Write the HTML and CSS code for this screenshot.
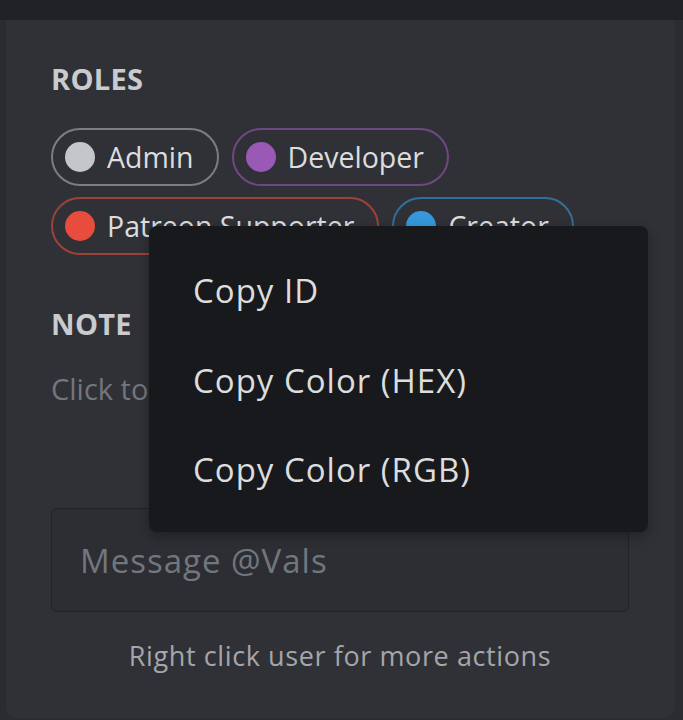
FILE: index.html
```html
<!DOCTYPE html>
<html>
<head>
<meta charset="utf-8">
<link rel="stylesheet" href="styles.css">
</head>
<body>
<div class="top"></div>
<div class="panel">
  <div class="section-title roles-title">ROLES</div>
  <div class="roles">
    <div class="role role-admin"><span class="dot"></span><span class="role-name">Admin</span></div>
    <div class="role role-dev"><span class="dot"></span><span class="role-name">Developer</span></div>
    <div class="role role-patreon"><span class="dot"></span><span class="role-name">Patreon Supporter</span></div>
    <div class="role role-creator"><span class="dot"></span><span class="role-name">Creator</span></div>
  </div>
  <div class="section-title note-title">NOTE</div>
  <div class="note">Click to add a note</div>
  <div class="message">Message @Vals</div>
  <div class="hint">Right click user for more actions</div>
</div>
<div class="menu">
  <div class="menu-item">Copy ID</div>
  <div class="menu-item">Copy Color (HEX)</div>
  <div class="menu-item">Copy Color (RGB)</div>
</div>
</body>
</html>
```
FILE: styles.css
```css
html, body {
  margin: 0;
  padding: 0;
}
body {
  width: 683px;
  height: 720px;
  background: #2a2c30;
  font-family: "Open Sans", "Noto Sans", sans-serif;
  overflow: hidden;
  position: relative;
}
.top {
  height: 20px;
  background: #202225;
}
.panel {
  margin: 0 8px 0 6px;
  height: 698px;
  box-sizing: border-box;
  background: #2f3136;
  border-radius: 0 4px 12px 12px;
  padding: 0 0 0 45px;
  display: flex;
  flex-direction: column;
}
.section-title {
  font-weight: 700;
  font-size: 29px;
  line-height: 36px;
  color: #c9cbce;
  letter-spacing: 0.3px;
}
.roles-title {
  margin-top: 41px;
}
.roles {
  display: flex;
  flex-wrap: wrap;
  gap: 11px 13px;
  margin-top: 31px;
  width: 560px;
}
.role {
  height: 58px;
  box-sizing: border-box;
  border: 2px solid;
  border-radius: 29px;
  display: flex;
  align-items: center;
  padding: 0 23px 0 12px;
  gap: 12px;
  font-size: 28.5px;
  color: #dcddde;
}
.dot {
  width: 30px;
  height: 30px;
  border-radius: 50%;
  flex: none;
}
.role-admin { border-color: rgba(185, 187, 190, 0.55); }
.role-admin .dot { background: #c4c6c9; }
.role-dev { border-color: rgba(155, 89, 182, 0.6); }
.role-dev .dot { background: #9b59b6; }
.role-patreon { border-color: rgba(231, 76, 60, 0.6); }
.role-patreon .dot { background: #e74c3c; }
.role-creator { border-color: rgba(52, 152, 219, 0.6); }
.role-creator .dot { background: #3498db; }
.note-title {
  margin-top: 51px;
}
.note {
  margin-top: 29px;
  font-size: 29px;
  line-height: 36px;
  color: #72767d;
}
.message {
  margin-top: 101px;
  width: 578px;
  height: 104px;
  box-sizing: border-box;
  background: #2c2e33;
  border: 1px solid #222327;
  border-radius: 6px;
  padding-left: 28px;
  display: flex;
  align-items: center;
  font-size: 33px;
  letter-spacing: 1px;
  color: #72767d;
}
.hint {
  width: 578px;
  text-align: center;
  margin-top: 26px;
  font-size: 27px;
  letter-spacing: 0.6px;
  line-height: 36px;
  color: #a3a6aa;
}
.menu {
  position: absolute;
  left: 149px;
  top: 226px;
  width: 499px;
  height: 306px;
  box-sizing: border-box;
  background: #18191c;
  border-radius: 8px;
  box-shadow: 0 4px 12px rgba(0, 0, 0, 0.3);
  padding: 20px 0 0 44px;
  display: flex;
  flex-direction: column;
}
.menu-item {
  height: 89.5px;
  display: flex;
  align-items: center;
  font-size: 33px;
  letter-spacing: 1px;
  color: #dcddde;
}
```
